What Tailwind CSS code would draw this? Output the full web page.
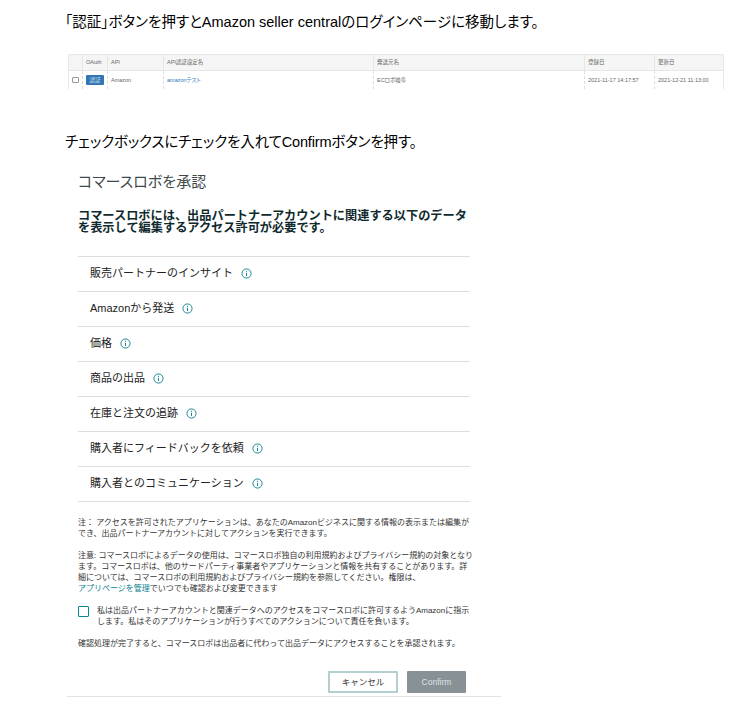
<!DOCTYPE html>
<html lang="ja">
<head>
<meta charset="UTF-8" />
<title>コマースロボを承認</title>
<script src="https://cdn.jsdelivr.net/npm/@tailwindcss/browser@4"></script>
</head>
<body class="bg-white text-black font-['Liberation_Sans','Noto_Sans_CJK_JP',sans-serif] w-[729px] h-[721px] overflow-hidden">
  <p class="pl-[65px] pt-[12px] text-[14.5px] leading-[20px] whitespace-nowrap [font-feature-settings:'palt']">「認証」ボタンを押すとAmazon seller centralのログインページに移動します。</p>

  <!-- table -->
  <div class="ml-[68px] mt-[22px] w-[656px] border-t border-x border-[#e6e6e6] rounded-t-[2px] text-[5.5px] text-[#666] [font-feature-settings:'palt']">
    <div class="flex h-[16px] items-stretch bg-[#f5f5f5] border-b border-[#e6e6e6]">
      <span class="w-[14px] border-r border-[#e6e6e6]"></span>
      <span class="w-[25px] pl-[3px] flex items-center border-r border-[#e6e6e6]">OAuth</span>
      <span class="w-[56px] pl-[3px] flex items-center border-r border-[#e6e6e6]">API</span>
      <span class="w-[210px] pl-[3px] flex items-center border-r border-[#e6e6e6]">API認証設定名</span>
      <span class="w-[211px] pl-[3px] flex items-center border-r border-[#e6e6e6]">発送元名</span>
      <span class="w-[70px] pl-[3px] flex items-center border-r border-[#e6e6e6]">登録日</span>
      <span class="flex-1 pl-[3px] flex items-center">更新日</span>
    </div>
    <div class="flex h-[18px] items-stretch">
      <span class="w-[14px] pl-[3px] flex items-center border-r border-dashed border-[#ddd]"><span class="w-[7px] h-[6px] border border-[#999] rounded-[1px]"></span></span>
      <span class="w-[25px] pl-[3px] flex items-center border-r border-dashed border-[#ddd]"><span class="w-[18px] h-[10px] flex items-center justify-center bg-[#3376b5] text-[#cfe0f0] rounded-[1px]">認証</span></span>
      <span class="w-[56px] pl-[3px] flex items-center border-r border-dashed border-[#ddd]">Amazon</span>
      <span class="w-[210px] pl-[3px] flex items-center border-r border-dashed border-[#ddd] text-[#3376b5]">amazonテスト</span>
      <span class="w-[211px] pl-[3px] flex items-center border-r border-dashed border-[#ddd]">ECロボ岐阜</span>
      <span class="w-[70px] pl-[3px] flex items-center border-r border-dashed border-[#ddd]">2021-11-17 14:17:57</span>
      <span class="flex-1 pl-[3px] flex items-center">2021-12-21 11:13:00</span>
    </div>
  </div>

  <p class="pl-[65px] mt-[43px] text-[14.5px] leading-[20px] tracking-[-0.16px] whitespace-nowrap [font-feature-settings:'palt']">チェックボックスにチェックを入れてConfirmボタンを押す。</p>

  <div class="ml-[78px] mt-[19px] w-[392px] text-[#222]">
    <h1 class="text-[15px] leading-[22px] text-[#3f4a4c] [font-feature-settings:'palt']">コマースロボを承認</h1>
    <h2 class="mt-[17px] text-[12.2px] leading-[12px] font-bold text-[#0f2a2e] whitespace-nowrap">コマースロボには、出品パートナーアカウントに関連する以下のデータ<br />を表示して編集するアクセス許可が必要です。</h2>

    <ul class="mt-[22px] border-t border-[#ddd] text-[11px] text-[#222]">
      <li class="h-[35px] border-b border-[#ddd] flex items-center pl-[12px] pb-[2px] gap-[8px]">販売パートナーのインサイト
        <svg class="w-[11px] h-[11px]" viewBox="0 0 12 12" fill="none" stroke="#0a7f8c"><circle cx="6" cy="6" r="5" /><path d="M6 5.2v3.6M6 3v1.2" /></svg></li>
      <li class="h-[35px] border-b border-[#ddd] flex items-center pl-[12px] pb-[2px] gap-[8px]">Amazonから発送
        <svg class="w-[11px] h-[11px]" viewBox="0 0 12 12" fill="none" stroke="#0a7f8c"><circle cx="6" cy="6" r="5" /><path d="M6 5.2v3.6M6 3v1.2" /></svg></li>
      <li class="h-[35px] border-b border-[#ddd] flex items-center pl-[12px] pb-[2px] gap-[8px]">価格
        <svg class="w-[11px] h-[11px]" viewBox="0 0 12 12" fill="none" stroke="#0a7f8c"><circle cx="6" cy="6" r="5" /><path d="M6 5.2v3.6M6 3v1.2" /></svg></li>
      <li class="h-[35px] border-b border-[#ddd] flex items-center pl-[12px] pb-[2px] gap-[8px]">商品の出品
        <svg class="w-[11px] h-[11px]" viewBox="0 0 12 12" fill="none" stroke="#0a7f8c"><circle cx="6" cy="6" r="5" /><path d="M6 5.2v3.6M6 3v1.2" /></svg></li>
      <li class="h-[35px] border-b border-[#ddd] flex items-center pl-[12px] pb-[2px] gap-[8px]">在庫と注文の追跡
        <svg class="w-[11px] h-[11px]" viewBox="0 0 12 12" fill="none" stroke="#0a7f8c"><circle cx="6" cy="6" r="5" /><path d="M6 5.2v3.6M6 3v1.2" /></svg></li>
      <li class="h-[35px] border-b border-[#ddd] flex items-center pl-[12px] pb-[2px] gap-[8px]">購入者にフィードバックを依頼
        <svg class="w-[11px] h-[11px]" viewBox="0 0 12 12" fill="none" stroke="#0a7f8c"><circle cx="6" cy="6" r="5" /><path d="M6 5.2v3.6M6 3v1.2" /></svg></li>
      <li class="h-[35px] border-b border-[#ddd] flex items-center pl-[12px] pb-[2px] gap-[8px]">購入者とのコミュニケーション
        <svg class="w-[11px] h-[11px]" viewBox="0 0 12 12" fill="none" stroke="#0a7f8c"><circle cx="6" cy="6" r="5" /><path d="M6 5.2v3.6M6 3v1.2" /></svg></li>
    </ul>

    <div class="text-[8px] leading-[11px] text-[#333] whitespace-nowrap">
      <p class="mt-[15px]">注： アクセスを許可されたアプリケーションは、あなたのAmazonビジネスに関する情報の表示または編集が<br />でき、出品パートナーアカウントに対してアクションを実行できます。</p>
      <p class="mt-[11px]">注意: コマースロボによるデータの使用は、コマースロボ独自の利用規約およびプライバシー規約の対象となり<br />ます。コマースロボは、他のサードパーティ事業者やアプリケーションと情報を共有することがあります。詳<br />細については、コマースロボの利用規約およびプライバシー規約を参照してください。権限は、<br /><span class="text-[#0a7f8c]">アプリページを管理</span>でいつでも確認および変更できます</p>
      <div class="mt-[11px] flex gap-[8px]">
        <span class="w-[11px] h-[11px] mt-[1px] border border-[#0a8a96] rounded-[1px] shrink-0"></span>
        <p>私は出品パートナーアカウントと関連データへのアクセスをコマースロボに許可するようAmazonに指示<br />します。私はそのアプリケーションが行うすべてのアクションについて責任を負います。</p>
      </div>
      <p class="mt-[11px]">確認処理が完了すると、コマースロボは出品者に代わって出品データにアクセスすることを承認されます。</p>
    </div>

    <div class="mt-[22px] pr-[4px] flex justify-end gap-[9px] text-[8.5px]">
      <button class="w-[70px] h-[22px] bg-white border-2 border-[#b4cfd0] rounded-[1px] text-[#333]">キャンセル</button>
      <button class="w-[59px] h-[22px] bg-[#879196] rounded-[1px] text-[#dfe3e4]">Confirm</button>
    </div>
  </div>
  <div class="ml-[67px] mt-[3px] w-[434px] border-t border-[#e3e3e3]"></div>
</body>
</html>
